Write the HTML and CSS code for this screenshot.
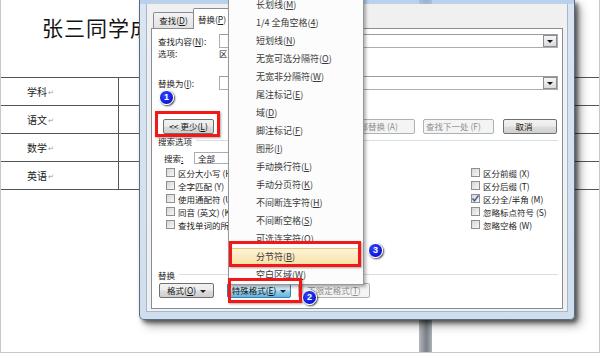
FILE: index.html
```html
<!DOCTYPE html>
<html lang="zh-CN">
<head>
<meta charset="utf-8">
<title>查找和替换</title>
<link rel="stylesheet" href="styles.css">
</head>
<body>
<div class="screen">
  <div class="doc">
    <h1 class="title">张三同学成绩单</h1>
    <div class="grades">
      <div class="grow"><div class="gcell">学科<span class="pm">↵</span></div><div class="gcell"></div></div>
      <div class="grow"><div class="gcell">语文<span class="pm">↵</span></div><div class="gcell"></div></div>
      <div class="grow"><div class="gcell">数学<span class="pm">↵</span></div><div class="gcell"></div></div>
      <div class="grow"><div class="gcell">英语<span class="pm">↵</span></div><div class="gcell"></div></div>
    </div>
  </div>

  <div class="backbar"></div>

  <div class="dialog">
    <div class="client">
      <div class="tabs">
        <div class="tab">查找(<u>D</u>)</div>
        <div class="tab active">替换(<u>P</u>)</div>
      </div>
      <div class="page">
        <div class="field-row">
          <span class="lbl">查找内容(<u>N</u>):</span>
          <div class="combo"><span class="combo-btn"><i class="tri"></i></span></div>
        </div>
        <div class="opts-row"><span class="lbl">选项:</span><span>区分全/半角</span></div>
        <div class="field-row replace-row">
          <span class="lbl">替换为(<u>I</u>):</span>
          <div class="combo"><span class="combo-btn"><i class="tri"></i></span></div>
        </div>
        <div class="btn-row">
          <button class="btn less">&lt;&lt; 更少(<u>L</u>)</button>
          <div class="btn-group">
            <button class="btn dis">替换(<u>R</u>)</button>
            <button class="btn dis">全部替换 (A)</button>
            <button class="btn dis">查找下一处 (F)</button>
            <button class="btn cancel">取消</button>
          </div>
        </div>
        <div class="group-head"><span>搜索选项</span><i class="rule"></i></div>
        <div class="search-row">
          <span class="lbl-s">搜索<u>:</u></span>
          <div class="combo small">全部</div>
        </div>
        <div class="checks">
          <ul class="col col-left">
            <li><span class="cb"></span>区分大小写 (H)</li>
            <li><span class="cb"></span>全字匹配 (Y)</li>
            <li><span class="cb"></span>使用通配符 (U)</li>
            <li><span class="cb"></span>同音 (英文) (K)</li>
            <li><span class="cb"></span>查找单词的所有形式 (英文) (W)</li>
          </ul>
          <ul class="col col-right">
            <li><span class="cb"></span>区分前缀 (X)</li>
            <li><span class="cb"></span>区分后缀 (T)</li>
            <li><span class="cb"><svg class="tick" viewBox="0 0 9 9"><path d="M1.5 4.5 L3.5 6.8 L7.5 1.5" fill="none" stroke="#3d5a9a" stroke-width="1.4"/></svg></span>区分全/半角 (M)</li>
            <li><span class="cb"></span>忽略标点符号 (S)</li>
            <li><span class="cb"></span>忽略空格 (W)</li>
          </ul>
        </div>
        <div class="group-head rep-head"><span>替换</span><i class="rule"></i></div>
        <div class="btn-row bottom-row">
          <button class="btn fmt">格式(<u>O</u>) <i class="tri"></i></button>
          <button class="btn pressed">特殊格式(<u>E</u>) <i class="tri"></i></button>
          <button class="btn dis nolimit">不限定格式(<u>T</u>)</button>
        </div>
      </div>
    </div>
  </div>

  <ul class="menu">
    <li>长划线(<u>M</u>)</li>
    <li>1/4 全角空格(<u>4</u>)</li>
    <li>短划线(<u>N</u>)</li>
    <li>无宽可选分隔符(<u>O</u>)</li>
    <li>无宽非分隔符(<u>W</u>)</li>
    <li>尾注标记(<u>E</u>)</li>
    <li>域(<u>D</u>)</li>
    <li>脚注标记(<u>F</u>)</li>
    <li>图形(<u>I</u>)</li>
    <li>手动换行符(<u>L</u>)</li>
    <li>手动分页符(<u>K</u>)</li>
    <li>不间断连字符(<u>H</u>)</li>
    <li>不间断空格(<u>S</u>)</li>
    <li>可选连字符(<u>O</u>)</li>
    <li class="hot">分节符(<u>B</u>)</li>
    <li>空白区域(<u>W</u>)</li>
  </ul>

  <div class="redbox r1"></div>
  <div class="redbox r3"></div>
  <div class="redbox r2"></div>

  <div class="badge b1">1</div>
  <div class="badge b2">2</div>
  <div class="badge b3">3</div>
</div>
</body>
</html>
```

FILE: styles.css
```css
* { box-sizing: border-box; margin: 0; padding: 0; }
html, body { width: 600px; height: 353px; overflow: hidden; background: #fff; }
body { font-family: "Noto Sans CJK SC", "Noto Sans", sans-serif; color: #1c1c1c; }
ul { list-style: none; }
u { text-decoration: underline; text-underline-offset: 1px; }

.screen {
  position: relative;
  width: 600px;
  height: 353px;
  overflow: hidden;
  background: #fff;
  border: 1px solid #c8c8c8;
  border-top: none;
}

/* ---------- document behind ---------- */
.doc { padding-top: 13px; }
.title {
  font-size: 21px;
  font-weight: 400;
  line-height: 28px;
  height: 64px;
  padding-left: 41px;
  letter-spacing: 1px;
  color: #141414;
}
.grades { border-top: 1px solid #555; width: 620px; }
.grow {
  display: grid;
  grid-template-columns: 118px 1fr;
  height: 28px;
  border-bottom: 1px solid #555;
}
.gcell {
  display: flex;
  align-items: center;
  padding-left: 26px;
  font-size: 10px;
  color: #222;
}
.gcell:first-child { border-right: 1px solid #555; }
.pm { font-size: 7px; color: #999; margin-left: 1px; }

.backbar {
  position: absolute;
  left: 418px;
  top: 0;
  width: 13px;
  height: 353px;
  background: linear-gradient(90deg, #b4b9be, #858b91 45%, #7c8288 60%, #aeb3b8);
}

/* ---------- dialog ---------- */
.dialog {
  position: absolute;
  z-index: 1;
  left: 138px;
  top: 0;
  width: 436px;
  height: 320px;
  padding: 4px 6px 7px 6px;
  border: 1px solid #5d6b7d;
  border-top: none;
  border-radius: 0 0 5px 5px;
  background: linear-gradient(rgba(160, 192, 226, 0.75) 0, rgba(172, 200, 230, 0.8) 4px, #d9e5f2 4px, #cfdeee 100%);
  box-shadow: 3px 3px 4px rgba(0, 0, 0, 0.55), 6px 6px 10px rgba(0, 0, 0, 0.3);
}
.client {
  height: 100%;
  background: #f0f0f0;
  border: 1px solid #a8b6c7;
  border-top: none;
  padding: 0 4px 2px 4px;
  display: flex;
  flex-direction: column;
}

.tabs {
  display: flex;
  align-items: flex-end;
  height: 24px;
  padding-left: 2px;
  position: relative;
  z-index: 2;
}
.tab {
  height: 16px;
  width: 41px;
  text-align: center;
  font-size: 8.5px;
  line-height: 15px;
  border: 1px solid #898c95;
  border-bottom: none;
  background: linear-gradient(#f3f3f3, #e2e2e2);
  margin-right: -1px;
  border-radius: 2px 2px 0 0;
  white-space: nowrap;
}
.tab.active {
  height: 21px;
  width: 46px;
  background: #fff;
  margin-bottom: -1px;
  line-height: 20px;
  padding-right: 8px;
}

.page {
  flex: 1;
  background: #fff;
  border: 1px solid #898c95;
  padding: 5px 4px 0 6px;
  font-size: 8.5px;
  position: relative;
  z-index: 1;
}

.field-row { display: flex; align-items: center; height: 14px; }
.replace-row { margin-top: 17px; }
.lbl { width: 61px; flex: none; white-space: nowrap; }
.combo {
  flex: 1;
  height: 14px;
  border: 1px solid #abadb3;
  border-top-color: #9a9ca1;
  background: #fff;
  position: relative;
}
.combo-btn {
  position: absolute;
  right: 0;
  top: 0;
  width: 14px;
  height: 12px;
  border: 1px solid #8c8e94;
  background: linear-gradient(#f6f6f6, #dadada);
  display: flex;
  align-items: center;
  justify-content: center;
}
.tri {
  display: inline-block;
  width: 0;
  height: 0;
  border-left: 3px solid transparent;
  border-right: 3px solid transparent;
  border-top: 3px solid #111;
  vertical-align: middle;
}
.opts-row { display: flex; height: 11px; line-height: 11px; white-space: nowrap; }

.btn {
  font-family: inherit;
  font-size: 8.5px;
  height: 15px;
  line-height: 13px;
  border: 1px solid #707070;
  border-radius: 2px;
  background: linear-gradient(#f2f2f2 0, #ebebeb 48%, #dddddd 52%, #cfcfcf 100%);
  color: #111;
  white-space: nowrap;
  padding: 0;
}
.btn-row { display: flex; align-items: center; height: 15px; margin-top: 29px; }
.btn.less { width: 51px; margin-left: 5px; }
.btn-group { margin-left: auto; margin-right: 1px; display: flex; }
.btn-group .btn { width: 71px; margin-left: 8px; padding-right: 10px; }
.btn-group .btn.cancel { width: 54px; margin-left: 9px; padding-right: 12px; }
.btn.dis {
  border-color: #adb2b5;
  background: #f4f4f4;
  color: #8f8f8f;
}

.group-head {
  display: flex;
  align-items: center;
  height: 11px;
  margin-top: 1px;
  white-space: nowrap;
}
.rule { flex: 1; height: 1px; background: #d5dfe5; margin-left: 4px; }

.search-row { display: flex; align-items: center; height: 12px; margin-top: 6px; padding-left: 6px; }
.lbl-s { width: 30px; }
.combo.small { flex: none; width: 100px; height: 12px; line-height: 10px; padding-left: 3px; border-color: #abadb3; }

.checks { display: flex; margin-top: 2px; height: 66px; }
.col li {
  height: 13px;
  display: flex;
  align-items: center;
  white-space: nowrap;
}
.col-left { padding-left: 8px; }
.col-right { margin-left: auto; width: 87px; }
.cb {
  width: 9px;
  height: 9px;
  border: 1px solid #8f8f8f;
  background: linear-gradient(135deg, #d6d6d6, #f8f8f8);
  margin-right: 3px;
  position: relative;
  flex: none;
}
.tick { position: absolute; left: -1px; top: -1px; width: 9px; height: 9px; }

.rep-head { margin-top: 37px; }
.bottom-row { margin-top: 3px; }
.btn.fmt { width: 55px; margin-left: 1px; }
.btn.pressed {
  width: 64px;
  margin-left: 13px;
  border-color: #3c7fb1;
  background: linear-gradient(#e5f4fc 0, #c4e5f6 48%, #98d1ef 52%, #68b3db 100%);
}
.btn.nolimit { width: 72px; margin-left: 7px; }
.btn .tri { margin-left: 2px; border-top-color: #222; }

/* ---------- popup menu ---------- */
.menu {
  position: absolute;
  z-index: 5;
  left: 227px;
  top: -8px;
  width: 136px;
  padding: 3px 2px 0 2px;
  background: #fcfcfc;
  border: 1px solid #979797;
  box-shadow: 2px 2px 3px rgba(0, 0, 0, 0.3);
  font-size: 9px;
  color: #3a3a3a;
}
.menu li {
  height: 18px;
  line-height: 18px;
  padding-left: 25px;
  white-space: nowrap;
}
.menu li.hot {
  background: linear-gradient(#fdf3d6, #f9e1a6);
  border: 1px solid #e6c579;
  border-radius: 2px;
  line-height: 16px;
  padding-left: 24px;
}

/* ---------- annotations ---------- */
.redbox {
  position: absolute;
  z-index: 6;
  border: 3px solid #f21818;
  box-shadow: 1px 1px 2px rgba(0, 0, 0, 0.35);
}
.r1 { left: 154px; top: 111px; width: 65px; height: 26px; }
.r3 { left: 228px; top: 241px; width: 132px; height: 26px; }
.r2 { left: 227px; top: 278px; width: 74px; height: 25px; }

.badge {
  position: absolute;
  z-index: 7;
  width: 15px;
  height: 15px;
  border-radius: 50%;
  border: 1.5px solid #fff;
  background: radial-gradient(circle at 40% 35%, #3347ff, #0a17d6 70%);
  box-shadow: 1px 1px 2px rgba(0, 0, 0, 0.75);
  color: #fff;
  font-family: "Liberation Sans", Arial, sans-serif;
  font-weight: 700;
  font-size: 9px;
  line-height: 12px;
  text-align: center;
}
.b1 { left: 158px; top: 90px; }
.b2 { left: 301px; top: 290px; }
.b3 { left: 367px; top: 243px; }
```
